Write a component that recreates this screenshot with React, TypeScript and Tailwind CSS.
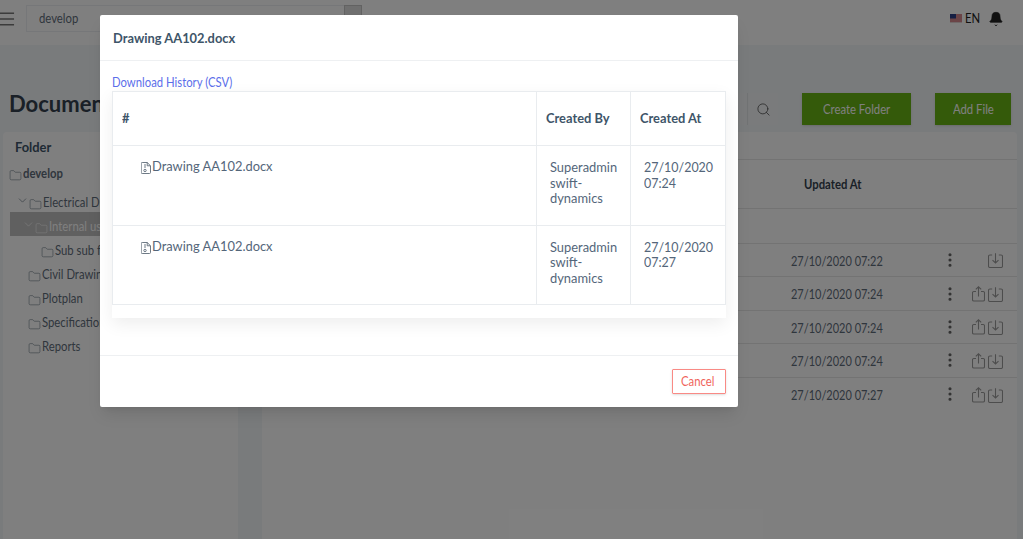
import React from 'react';
import { Menu, Search, ChevronDown, Folder, Bell, EllipsisVertical } from 'lucide-react';

const rows = [
  { date: '27/10/2020 07:22', share: false },
  { date: '27/10/2020 07:24', share: true },
  { date: '27/10/2020 07:24', share: true },
  { date: '27/10/2020 07:24', share: true },
  { date: '27/10/2020 07:27', share: true },
];

const history = [
  { at: ['27/10/2020', '07:24'] },
  { at: ['27/10/2020', '07:27'] },
];

const ShareIcon = () => (
  <svg width="13" height="16" viewBox="0 0 13 16" fill="none" stroke="#9a9a9a" strokeWidth="1.1">
    <path d="M4 5.500H1.800a1.300 1.300 0 0 0-1.300 1.300v6.900a1.300 1.300 0 0 0 1.300 1.300h9.400a1.300 1.300 0 0 0 1.300-1.300V6.800a1.300 1.300 0 0 0-1.300-1.300H9" />
    <path d="M6.500 10.500V.8M3.800 3.400 6.500.8l2.700 2.600" />
  </svg>
);

const DownloadIcon = () => (
  <svg width="15" height="15" viewBox="0 0 15 15" fill="none" stroke="#9a9a9a" strokeWidth="1.1">
    <path d="M4.200 2H1.900A1.400 1.400 0 0 0 .5 3.400v9.700a1.400 1.400 0 0 0 1.400 1.400h11.200a1.400 1.400 0 0 0 1.400-1.400V3.400A1.400 1.400 0 0 0 13.100 2h-2.300" />
    <path d="M7.500.3v9.700M4.500 7.200 7.500 10l3-2.800" />
  </svg>
);

const FileIcon = () => (
  <svg width="10" height="12" viewBox="0 0 10 12" fill="none" stroke="#5d6b78" strokeWidth="0.9" className="mt-[5px] shrink-0">
    <path d="M1.200.5h5l3.300 3.300v6.700a1 1 0 0 1-1 1H1.200a1 1 0 0 1-1-1v-9a1 1 0 0 1 1-1z" />
    <path d="M6.200.5v3.300h3.300M4 2v4" />
    <circle cx="4" cy="8.500" r="1.200" />
  </svg>
);

// the screenshot is squeezed sideways, so its text is narrower than it is tall
const Small = ({ children }: { children: React.ReactNode }) => (
  <span className="block w-fit origin-left scale-x-[0.87] whitespace-nowrap text-[13px]">{children}</span>
);

const Large = ({ children }: { children: React.ReactNode }) => (
  <span className="block w-fit origin-left scale-x-[0.92] text-[14px]">{children}</span>
);

const FolderRow = ({ label, indent, open, bold }: { label: string; indent: string; open?: boolean; bold?: boolean }) => (
  <div className={`flex h-6 items-center whitespace-nowrap text-[#5f6d7b] ${indent} ${bold ? 'font-bold text-[#3e5569]' : ''}`}>
    {open && <ChevronDown size={13} strokeWidth={1.2} className="-mt-[6px] shrink-0" />}
    <Folder size={13} strokeWidth={1} className="mr-[1px] mt-[2px] shrink-0" />
    <Small>{label}</Small>
  </div>
);

export default function App() {
  return (
    <div className="font-[Lato,sans-serif] relative h-[539px] w-[1023px] overflow-hidden bg-[#f3f6f9] text-[#3e5569]">
      {/* page behind the dialog */}
      <header className="flex h-[45px] items-center bg-white pb-[8px] pr-[19px]">
        <Menu size={20} strokeWidth={1.2} className="ml-[-3px] text-[#333]" />
        <div className="ml-[9px] flex h-[27px] w-[319px] items-center border border-[#eceff2] pl-[12px] text-[#5f6d7b]">
          <Small>develop</Small>
        </div>
        <div className="ml-[-1px] h-[27px] w-[18px] border border-[#c5c5c5] bg-[#dedede]" />
        <div className="ml-auto flex items-center text-[#222]">
          <svg width="12" height="9" viewBox="0 0 12 9" className="mr-[3px]">
            <rect width="12" height="9" fill="#e3d3d3" />
            <path d="M0 1h12M0 3h12M0 5h12M0 7h12" stroke="#c9404a" strokeWidth="1" />
            <rect width="6" height="4.500" fill="#2c3f86" />
          </svg>
          <span className="w-[15px]"><Small>EN</Small></span>
          <Bell size={16} fill="#222" strokeWidth={1} className="ml-[8px]" />
        </div>
      </header>

      <div className="flex h-[48px] items-start pl-[9px] pr-[12px] pt-[48px]">
        <h1 className="-mt-[2px] text-[22px] leading-[26px] font-bold text-[#34414e]">Documents</h1>
        <div className="ml-auto flex">
          <div className="h-[32px] w-[20px] border-r border-[#e3e6e9] bg-[#f5f7f9]" />
          <div className="flex h-[32px] w-[30px] items-center justify-center bg-[#f5f7f9]">
            <Search size={15} strokeWidth={1.2} className="text-[#444]" />
          </div>
          <button className="ml-[24px] h-[32px] w-[109px] bg-[#69b515] pl-[21px] pt-[1px] text-left text-white shadow-sm"><Small>Create Folder</Small></button>
          <button className="ml-[24px] h-[32px] w-[76px] bg-[#69b515] pl-[18px] pt-[1px] text-left text-white shadow-sm"><Small>Add File</Small></button>
        </div>
      </div>

      <div className="flex gap-[24px] pl-[3px] pr-[6px] pt-[39px]">
        <aside className="h-[407px] w-[235px] rounded-t bg-white">
          <div className="pl-[12px] pt-[6px] pb-[7px] leading-[17px] font-bold text-[#3e5569]"><Large>Folder</Large></div>
          <FolderRow label="develop" indent="pl-[6px]" bold />
          <div className="h-[5px]" />
          <FolderRow label="Electrical Drawing" indent="pl-[13px]" open />
          <div className="ml-[7px] -mt-[3px] mb-[3px] flex h-[24px] items-center whitespace-nowrap bg-[#c0c0c0] pl-[12px] pt-[6px] text-white">
            <ChevronDown size={13} strokeWidth={1.2} className="-mt-[6px] shrink-0" />
            <Folder size={13} strokeWidth={1} className="mr-[1px] mt-[2px] shrink-0" />
            <Small>Internal use</Small>
          </div>
          <FolderRow label="Sub sub folder" indent="pl-[38px]" />
          <FolderRow label="Civil Drawing" indent="pl-[25px]" />
          <FolderRow label="Plotplan" indent="pl-[25px]" />
          <FolderRow label="Specification" indent="pl-[25px]" />
          <FolderRow label="Reports" indent="pl-[25px]" />
        </aside>

        <section className="h-[407px] flex-1 rounded-t bg-white">
          <div className="h-[28px] border-b border-[#e6e6e6]" />
          <div className="flex h-[49px] items-center border-b border-[#e6e6e6] pl-[542px] pt-[1px] font-bold text-[#34414e]">
            <Small>Updated At</Small>
          </div>
          <div className="h-[35px] border-b border-[#e6e6e6]" />
          {rows.map((row, i) => (
            <div key={i} className="flex h-[33.400px] items-center border-b border-[#e6e6e6] pt-[3px] text-[#5f6d7b] last:border-b-0">
              <span className="ml-[529px] w-[150px] scale-x-[0.97] origin-left"><Small>{row.date}</Small></span>
              <EllipsisVertical size={18} strokeWidth={2.2} className="-mt-[3px] text-[#666]" />
              <div className="-mt-[2px] flex w-[44px] items-end justify-end gap-[3px]">
                {row.share && <ShareIcon />}
                <DownloadIcon />
              </div>
            </div>
          ))}
        </section>
      </div>

      {/* dialog */}
      <div className="absolute inset-0 bg-black/50">
        <div className="absolute left-[100px] top-[15px] flex h-[392px] w-[638px] flex-col rounded-[2px] bg-white shadow-lg">
          <div className="flex h-[46px] shrink-0 items-center border-b border-[#eef0f2] px-[13px] font-bold text-[#3e5569]">
            <Large>Drawing AA102.docx</Large>
          </div>
          <div className="h-[294px] shrink-0 px-[12px] pt-[13px]">
            <a className="block leading-[16px] text-[#5b6eea]"><Small>Download History (CSV)</Small></a>
            <div className="mt-[1px] pb-[13px] shadow-[0_6px_16px_rgba(0,0,0,0.07)]">
              <table className="w-[614px] table-fixed border-collapse text-[#54667a]">
                <thead>
                  <tr className="h-[54px] text-left text-[#3e5569]">
                    <th className="w-[424px] border border-[#e9ecef] pb-[2px] pl-[9px] font-bold"><Large>#</Large></th>
                    <th className="w-[94px] border border-[#e9ecef] pb-[2px] pl-[9px] font-bold"><Large>Created By</Large></th>
                    <th className="border border-[#e9ecef] pb-[2px] pl-[9px] font-bold"><Large>Created At</Large></th>
                  </tr>
                </thead>
                <tbody>
                  {history.map((item, i) => (
                    <tr key={i} className="h-[79.500px] align-top leading-[15.500px]">
                      <td className="border border-[#e9ecef] pl-[28px] pt-[11px]">
                        <div className="flex leading-[18px]">
                          <FileIcon />
                          <span className="ml-px"><Large>Drawing AA102.docx</Large></span>
                        </div>
                      </td>
                      <td className="border border-[#e9ecef] pl-[13px] pt-[13px]">
                        <Large>Superadmin swift-dynamics</Large>
                      </td>
                      <td className="border border-[#e9ecef] pl-[13px] pt-[13px]">
                        <span className="block w-fit origin-left scale-x-[0.89] text-[14px]">
                          {item.at[0]}
                          <br />
                          {item.at[1]}
                        </span>
                      </td>
                    </tr>
                  ))}
                </tbody>
              </table>
            </div>
          </div>
          <div className="flex flex-1 items-start justify-end border-t border-[#eef0f2] pr-[12px] pt-[13px]">
            <button className="h-[25px] w-[54px] rounded-[1px] border border-[#f98a85] pl-[8px] text-left text-[#f0645c] shadow-sm"><Small>Cancel</Small></button>
          </div>
        </div>
      </div>
    </div>
  );
}
